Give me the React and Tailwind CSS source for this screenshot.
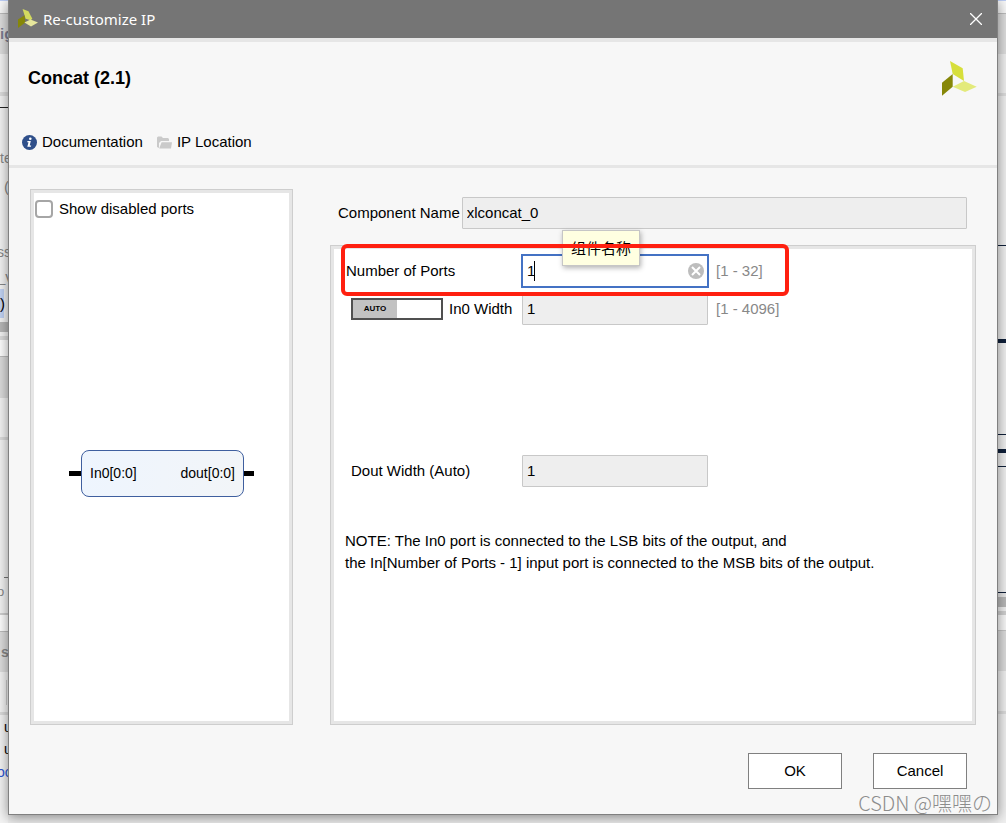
import React, { useState } from 'react';

function Logo({ className }) {
  return (
    <svg className={className} viewBox="0 0 35 35" aria-hidden="true">
      <path d="M8 0L20.700 7.300L22 20L10.700 13Z" fill="#d7df3b" />
      <path d="M0 21.700L10.700 13V25.700L0 34.700Z" fill="#868708" />
      <path d="M10.700 25.700L22 20L34.700 25.700L23 31Z" fill="#e3ea7b" />
    </svg>
  );
}

function SmallLogo({ className }) {
  return (
    <svg className={className} viewBox="0 0 20 20" aria-hidden="true">
      <path d="M4.600 0L10.500 2.200L14.300 9.800L12.600 11.200L7.600 9.800Z" fill="#d3da5f" />
      <path d="M0 10.400L6.600 6.200L7.300 13.400L0 19Z" fill="#868708" />
      <path d="M6.400 13.600L12.500 10.600L20 13.600L13 17.600Z" fill="#e6e69c" />
    </svg>
  );
}

function InfoIcon() {
  return (
    <svg className="h-[15px] w-[15px]" viewBox="0 0 15 15" aria-hidden="true">
      <circle cx="7.500" cy="7.500" r="7.500" fill="#2f4f8a" />
      <circle cx="8.300" cy="3.700" r="1.300" fill="#fff" />
      <path d="M5.500 6H8.800L7.700 10.500H9.200L8.900 11.700H5.300L6.500 7.200H5.200Z" fill="#fff" />
    </svg>
  );
}

function FolderIcon() {
  return (
    <svg className="h-[13px] w-[15px]" viewBox="0 0 15 13" aria-hidden="true">
      <path d="M0 1.500L1 0.500H4.500L6 2H11L12 3V5H4L2 7V12L0 11Z" fill="#cacaca" />
      <path d="M4.600 6.200H15L14 12.500H2.200Z" fill="#cacaca" />
    </svg>
  );
}

function Panel({ className, children }) {
  return (
    <div className={`flex border border-[#cecece] bg-[#e6e6e6] p-[3px] ${className}`}>
      <div className="min-w-0 flex-1 bg-white">{children}</div>
    </div>
  );
}

const field =
  'h-8 rounded-[1px] border border-[#c8c8c8] bg-[#eeeeee] px-1 pb-0.5 text-[15px] text-black';

const band = 'shrink-0 whitespace-nowrap';

function LeftBackdrop() {
  return (
    <div className="flex w-2 shrink-0 flex-col bg-[#f4f4f4] text-[15px] text-[#888888]" aria-hidden="true">
      <div className={`${band} h-[14px] border-t border-b border-t-[#bccdf5] border-b-[#bdbdbd] bg-[#f8f8f8]`} />
      <div className={`${band} h-10 bg-[#dedede] text-[15px] leading-10 font-bold text-[#7d7f91]`}>ig</div>
      <div className={`${band} h-[42px] border-b-4 border-[#dddddd]`} />
      <div className={`${band} h-3 border-b border-[#222222]`} />
      <div className={`${band} h-10`} />
      <div className={`${band} h-5 text-[14px] leading-5`}>te</div>
      <div className={`${band} h-[39px] pl-1 leading-[38px]`}>(</div>
      <div className={`${band} h-[38px]`} />
      <div className={`${band} h-[14px] text-[14px] leading-[14px] -ml-[3px]`}>ss</div>
      <div className={`${band} h-[30px] -ml-[3px] leading-[36px]`}>_v</div>
      <div className={`${band} h-[29px] w-1 bg-[#c2d4f5] leading-[29px] text-black`}>)</div>
      <div className={`${band} h-[14px] border-t-4 border-[#f4f4f4] bg-[#b8b8b8]`} />
      <div className={`${band} h-2 border-b-4 border-[#dcdcdc]`} />
      <div className={`${band} h-[17px] border-b border-[#bdbdbd] bg-white`} />
      <div className={`${band} h-[41px] bg-[#dcdcdc]`} />
      <div className={`${band} h-[42px] border-b-[3px] border-[#dcdcdc]`} />
      <div className={`${band} flex h-[138px] items-end justify-end`}>
        <div className="h-px w-1 bg-[#777777]" />
      </div>
      <div className={`${band} h-[37px] border-b-2 border-[#d0d0d0] text-[13px] leading-7 -ml-[3px]`}>o</div>
      <div className={`${band} h-[17px] border-b border-[#bdbdbd] bg-white`} />
      <div className={`${band} h-10 bg-[#dedede] pl-px text-[14px] leading-10 font-bold`}>s</div>
      <div className={`${band} h-[43px] border-b-[3px] border-[#dcdcdc]`}>
        <div className="mt-2 ml-1.5 h-[25px] w-px bg-[#cccccc]" />
      </div>
      <div className={`${band} flex flex-1 flex-col text-[14px] text-black`}>
        <span className="pt-px pl-1 leading-[22px]">u</span>
        <span className="pl-1 leading-[22px]">u</span>
        <span className="-ml-[3px] leading-6 text-[#2a56d6]">oc</span>
      </div>
    </div>
  );
}

function RightBackdrop() {
  return (
    <div className="flex w-2 shrink-0 flex-col bg-[#f0f0f0]" aria-hidden="true">
      <div className={`${band} h-[14px] border-t border-b border-t-[#bccdf5] border-b-[#bdbdbd] bg-[#f8f8f8]`} />
      <div className={`${band} h-10 bg-[#dedede]`} />
      <div className={`${band} h-[42px] border-b-[3px] border-[#dddddd]`} />
      <div className={`${band} h-[150px] border-b border-[#10203a]`} />
      <div className={`${band} h-[97px] border-b-4 border-[#10203a]`} />
      <div className={`${band} h-[92px] border-b border-[#10203a]`} />
      <div className={`${band} h-[18px] border-b-4 border-[#10203a]`} />
      <div className={`${band} h-[14px] border-b border-[#10203a]`} />
      <div className={`${band} h-[126px] border-b border-[#10203a]`} />
      <div className={`${band} h-[14px] border-t-4 border-[#e6e6e6] bg-[#b8b8b8]`} />
      <div className={`${band} h-2 border-b-4 border-[#d0d0d0]`} />
      <div className={`${band} h-4 border-b border-[#c4c4c4] bg-[#f8f8f8]`} />
      <div className={`${band} h-10 bg-[#dcdcdc]`} />
      <div className={`${band} h-[43px] border-b-[3px] border-[#dcdcdc]`} />
    </div>
  );
}

function BlockSymbol() {
  return (
    <div className="flex items-center justify-center text-sm">
      <span className="h-[5px] w-3 bg-black" />
      <div className="flex h-[47px] w-[163px] items-center justify-between rounded-lg border border-[#3f5f9f] bg-linear-to-r from-[#eef5fe] to-[#f2f5f8] px-2 pb-0.5">
        <span>In0[0:0]</span>
        <span>dout[0:0]</span>
      </div>
      <span className="h-[5px] w-2.5 bg-black" />
    </div>
  );
}

export default function App() {
  const [name, setName] = useState('xlconcat_0');
  const [ports, setPorts] = useState('1');
  const [show, setShow] = useState(false);

  return (
    <div className="relative flex min-h-screen overflow-hidden bg-[#eeeeee] font-['Liberation_Sans',Arial,sans-serif] text-[15px] leading-5 text-black">
      <LeftBackdrop />
      <div
        role="dialog"
        aria-labelledby="dialog-title"
        className="relative mb-2 flex min-w-0 flex-1 flex-col border border-t-0 border-[#808080] bg-[#f7f7f7] shadow-[0_2px_12px_rgba(0,0,0,0.45)]"
      >
        <div className="flex h-[38px] items-center bg-[#757575] pr-3.5 pl-[9px] text-white">
          <SmallLogo className="h-5 w-5" />
          <h1 id="dialog-title" className="ml-[5px] flex-1 font-['Noto_Sans',sans-serif] text-[15px]">
            Re-customize IP
          </h1>
          <button type="button" aria-label="Close" className="p-px">
            <svg className="h-3 w-3" viewBox="0 0 12 12" stroke="#fff" strokeWidth="1.300">
              <path d="M0 0L12 12M12 0L0 12" />
            </svg>
          </button>
        </div>

        <header className="h-[130px] border-t-4 border-b-[3px] border-[#e6e6e6] px-[13px]">
          <div className="flex justify-between pt-[19px] pr-[7px] pl-1.5">
            <h2 className="pt-[7px] text-lg leading-5 font-bold">Concat (2.1)</h2>
            <Logo className="h-[35px] w-[35px]" />
          </div>
          <nav className="mt-9 flex gap-3.5">
            <a href="#documentation" className="flex items-center gap-[5px]">
              <InfoIcon />
              Documentation
            </a>
            <a href="#location" className="flex items-center gap-[5px]">
              <FolderIcon />
              IP Location
            </a>
          </nav>
        </header>

        <main className="flex flex-1 gap-[37px] pt-[21px] pr-[21px] pl-[21px]">
          <Panel className="w-[263px] shrink-0">
            <label className="flex items-center gap-1.5 pt-1.5 pl-px">
              <input
                type="checkbox"
                checked={show}
                onChange={(e) => setShow(e.target.checked)}
                className="h-[18px] w-[18px] appearance-none rounded-[4px] border-2 border-[#a6a6a6] bg-white checked:bg-[#4472c4]"
              />
              Show disabled ports
            </label>
            <div className="pt-[231px]">
              <BlockSymbol />
            </div>
          </Panel>

          <div className="flex min-w-0 flex-1 flex-col pt-2">
            <div className="flex items-center gap-0.5 pr-[9px] pl-2">
              <label htmlFor="component-name">Component Name</label>
              <input
                id="component-name"
                value={name}
                onChange={(e) => setName(e.target.value)}
                className={`${field} min-w-0 flex-1`}
              />
            </div>

            <Panel className="mt-4 flex-1">
              <div className="relative flex h-11 items-center">
                <label htmlFor="ports" className="w-[188px] shrink-0 pl-3">
                  Number of Ports
                </label>
                <div className="relative">
                  <input
                    id="ports"
                    value={ports}
                    onChange={(e) => setPorts(e.target.value)}
                    className="block h-8 w-[186px] border border-[#4472c4] bg-white px-1 pb-0.5 text-[15px] outline-1 outline-[#4472c4]"
                  />
                  <span className="absolute top-[6px] left-3 h-5 w-px bg-black" />
                  <button type="button" aria-label="Clear" className="absolute top-2 right-1">
                    <svg className="block h-4 w-4" viewBox="0 0 16 16">
                      <circle cx="8" cy="8" r="8" fill="#bdbdbd" />
                      <path d="M4 4L12 12M12 4L4 12" stroke="#fff" strokeWidth="2" />
                    </svg>
                  </button>
                </div>
                <span className="pl-2 text-[#888888]">[1 - 32]</span>
                <div role="tooltip" className="absolute -top-[19px] left-[228px] border border-[#c6c6c6] bg-[#ffffe1] px-2 py-[7px] font-['Noto_Sans_CJK_SC',sans-serif] text-[15px] leading-5 shadow-[1px_2px_5px_rgba(0,0,0,0.3)]">
                  组件名称
                </div>
                <div className="pointer-events-none absolute -top-[5px] left-[7px] h-[52px] w-[448px] rounded-md border-4 border-[#ff2010]" />
              </div>

              <div className="flex items-center">
                <div className="flex w-[188px] shrink-0 items-center pl-[17px]">
                  <button type="button" aria-label="In0 width mode" className="flex h-[22px] w-[92px] border-2 border-[#505050] bg-white">
                    <span className="flex h-full w-1/2 items-center justify-center bg-[#c2c2c2] text-[8px] font-bold">AUTO</span>
                  </button>
                  <label htmlFor="in0-width" className="pl-1.5">
                    In0 Width
                  </label>
                </div>
                <input id="in0-width" value="1" readOnly className={`${field} w-[186px]`} />
                <span className="pl-2 text-[#888888]">[1 - 4096]</span>
              </div>

              <div className="mt-[130px] flex items-center">
                <label htmlFor="dout-width" className="w-[188px] shrink-0 pl-[17px]">
                  Dout Width (Auto)
                </label>
                <input id="dout-width" value="1" readOnly className={`${field} w-[186px]`} />
              </div>

              <p className="mt-[43px] pl-[11px] leading-[22px]">
                NOTE: The In0 port is connected to the LSB bits of the output, and
                <br />
                the In[Number of Ports - 1] input port is connected to the MSB bits of the output.
              </p>
            </Panel>
          </div>
        </main>

        <footer className="flex justify-end gap-[31px] pt-7 pr-[30px] pb-[25px]">
          <button type="button" className="h-9 w-[94px] border border-[#808080] bg-white">
            OK
          </button>
          <button type="button" className="h-9 w-[94px] border border-[#808080] bg-white">
            Cancel
          </button>
        </footer>
      </div>
      <RightBackdrop />
      <div className="pointer-events-none absolute right-3.5 bottom-1 font-['Noto_Sans_CJK_SC',sans-serif] text-xl leading-8 font-light text-[#8c8c8c]">
        CSDN @嘿嘿の
      </div>
    </div>
  );
}
